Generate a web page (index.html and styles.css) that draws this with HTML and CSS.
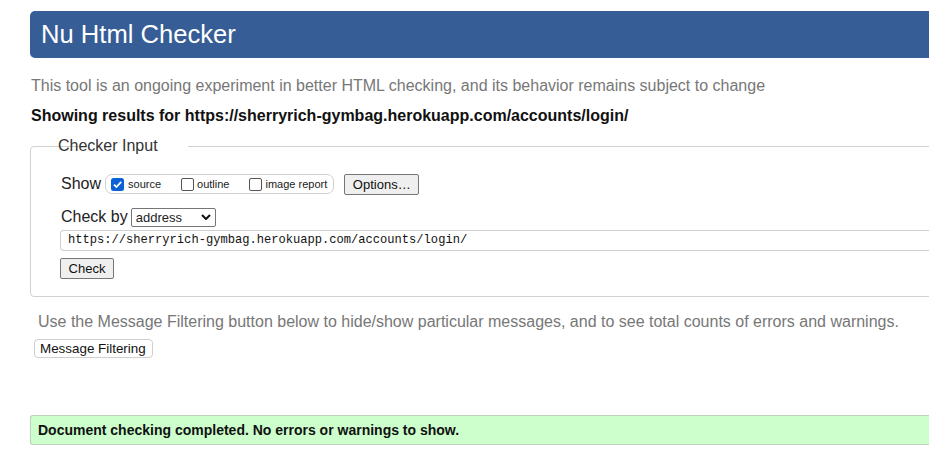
FILE: index.html
```html
<!DOCTYPE html>
<html>
<head>
<meta charset="utf-8">
<link rel="stylesheet" href="styles.css">
</head>
<body>
<div class="page">
  <h1 class="banner">Nu Html Checker</h1>
  <p class="intro">This tool is an ongoing experiment in better HTML checking, and its behavior remains subject to change</p>
  <p class="showing">Showing results for https://sherryrich-gymbag.herokuapp.com/accounts/login/</p>
  <fieldset class="input-box">
    <legend>Checker Input</legend>
    <div class="row show-row">
      <span class="label">Show</span>
      <span class="opts">
        <label class="opt"><span class="cb checked"><svg viewBox="0 0 13 13" width="13" height="13"><rect x="0" y="0" width="13" height="13" rx="2.5" fill="#0b62d6"/><path d="M3 6.6 L5.4 9 L10.2 3.8" fill="none" stroke="#fff" stroke-width="1.8"/></svg></span>source</label>
        <label class="opt"><span class="cb"></span>outline</label>
        <label class="opt"><span class="cb"></span>image report</label>
      </span>
      <span class="btn options">Options…</span>
    </div>
    <div class="row check-row">
      <span class="label">Check by</span>
      <span class="select">address<svg viewBox="0 0 10 6" width="10" height="6"><path d="M1 1 L5 5 L9 1" fill="none" stroke="#111" stroke-width="2"/></svg></span>
    </div>
    <div class="url">https://sherryrich-gymbag.herokuapp.com/accounts/login/</div>
    <div class="row"><span class="btn check">Check</span></div>
  </fieldset>
  <p class="filter-note">Use the Message Filtering button below to hide/show particular messages, and to see total counts of errors and warnings.</p>
  <div class="filter-btn">Message Filtering</div>
  <div class="success">Document checking completed. No errors or warnings to show.</div>
</div>
</body>
</html>
```
FILE: styles.css
```css
html, body {
  margin: 0;
  padding: 0;
  background: #fff;
  overflow: hidden;
}
body {
  font-family: "Liberation Sans", Arial, sans-serif;
  color: #222;
}
.page {
  width: 1000px;
  padding: 11px 0 0 30px;
}
.banner {
  margin: 0;
  height: 47px;
  box-sizing: border-box;
  background: #365d95;
  color: #fff;
  font-weight: normal;
  font-size: 25.6px;
  line-height: 47px;
  padding-left: 11px;
  border-radius: 5px 0 0 5px;
}
.intro {
  margin: 18px 0 0 1px;
  color: #777;
  font-size: 16px;
  line-height: 20px;
}
.showing {
  margin: 10px 0 0 1px;
  color: #111;
  font-weight: bold;
  font-size: 16px;
  line-height: 20px;
}
.input-box {
  margin: 11px 0 0 0;
  border: 1px solid #d2d2d2;
  border-radius: 4px;
  padding: 18px 0 17px 29px;
  min-width: 0;
}
.input-box legend {
  color: #333;
  font-size: 16px;
  padding: 0 1px;
  margin-left: 26px;
  position: relative;
  left: -29px;
}
.row {
  display: flex;
  align-items: center;
}
.label {
  font-size: 16px;
  color: #222;
  padding-left: 1px;
}
.show-row {
  height: 22px;
}
.opts {
  display: flex;
  align-items: center;
  margin-left: 4px;
  height: 18px;
  padding: 0 6px 0 5px;
  border: 1px solid #d0d0d0;
  border-radius: 7px;
  font-size: 11px;
  color: #222;
}
.opt {
  display: flex;
  align-items: center;
  margin-right: 20px;
}
.opt:last-child { margin-right: 0; }
.cb {
  width: 11px;
  height: 11px;
  border: 1px solid #555;
  border-radius: 2px;
  margin-right: 3px;
  display: inline-block;
  box-sizing: content-box;
}
.cb.checked {
  border: none;
  width: 13px;
  height: 13px;
  margin-right: 4px;
}
.cb svg { display: block; }
.btn {
  display: inline-block;
  box-sizing: border-box;
  background: #efefef;
  border: 1px solid #767676;
  border-radius: 2px;
  font-size: 13px;
  color: #111;
  text-align: center;
}
.options {
  margin-left: 10px;
  width: 75px;
  height: 21px;
  line-height: 19px;
}
.check-row {
  margin-top: 12px;
  height: 20px;
}
.select {
  margin-left: 3px;
  width: 85px;
  height: 19px;
  box-sizing: border-box;
  border: 1px solid #767676;
  border-radius: 2px;
  font-size: 13px;
  padding-left: 4px;
  display: flex;
  align-items: center;
  justify-content: space-between;
  padding-right: 4px;
}
.url {
  margin-top: 3px;
  height: 21px;
  box-sizing: border-box;
  border: 1px solid #d0d0d0;
  border-right: none;
  border-radius: 4px 0 0 4px;
  font-family: "Liberation Mono", "DejaVu Sans Mono", monospace;
  font-size: 12.1px;
  line-height: 19px;
  padding-left: 7px;
  color: #111;
}
.check {
  margin-top: 7px;
  width: 54px;
  height: 21px;
  line-height: 19px;
}
.filter-note {
  margin: 15px 0 0 8px;
  color: #777;
  font-size: 16px;
  line-height: 20px;
  white-space: nowrap;
}
.filter-btn {
  margin: 7px 0 0 4px;
  width: 119px;
  height: 19px;
  box-sizing: border-box;
  border: 1px solid #cfcfcf;
  border-radius: 4px;
  font-size: 13.4px;
  line-height: 17px;
  padding-left: 5px;
  color: #111;
  white-space: nowrap;
}
.success {
  margin-top: 57px;
  height: 30px;
  box-sizing: border-box;
  background: #ccffcc;
  border: 1px solid #c0d0c0;
  border-right: none;
  border-radius: 3px 0 0 3px;
  font-weight: bold;
  font-size: 14px;
  line-height: 28px;
  padding-left: 7px;
  color: #111;
  white-space: nowrap;
}
```
